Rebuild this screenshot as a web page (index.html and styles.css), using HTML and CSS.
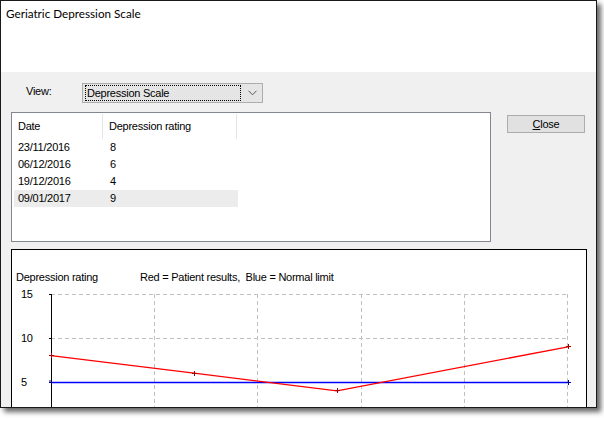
FILE: index.html
```html
<!DOCTYPE html>
<html>
<head>
<meta charset="utf-8">
<link rel="stylesheet" href="styles.css">
</head>
<body>
<div class="window">
  <div class="titlebar">Geriatric Depression Scale</div>
  <div class="content">
    <div class="view-row">
      <span class="view-label">View:</span>
      <div class="combo">
        <div class="combo-text">Depression Scale</div>
        <svg class="chevron" width="9" height="6" viewBox="0 0 9 6"><path d="M0.5 0.8 L4.5 4.8 L8.5 0.8" fill="none" stroke="#555" stroke-width="1"/></svg>
      </div>
    </div>
    <div class="list-row">
      <div class="listview">
        <div class="lv-header">
          <div class="lv-col c1">Date</div>
          <div class="lv-col c2">Depression rating</div>
        </div>
        <div class="lv-row"><div class="lv-cell c1">23/11/2016</div><div class="lv-cell c2">8</div></div>
        <div class="lv-row"><div class="lv-cell c1">06/12/2016</div><div class="lv-cell c2">6</div></div>
        <div class="lv-row"><div class="lv-cell c1">19/12/2016</div><div class="lv-cell c2">4</div></div>
        <div class="lv-row selected"><div class="lv-cell c1">09/01/2017</div><div class="lv-cell c2">9</div></div>
      </div>
      <button class="btn"><span class="u">C</span>lose</button>
    </div>
    <div class="chart">
      <svg width="574" height="180" viewBox="0 0 574 180">
        <g class="chart-text">
          <text x="4" y="31">Depression rating</text>
          <text x="128" y="31">Red = Patient results,&#160; Blue = Normal limit</text>
          <text x="9" y="48">15</text>
          <text x="9" y="92">10</text>
          <text x="9" y="136">5</text>
        </g>
        <g stroke="#c0c0c0" stroke-width="1" stroke-dasharray="4 3" fill="none">
          <path d="M39 44.5 H556"/>
          <path d="M39 88.5 H556"/>
          <path d="M142.5 44 V180"/>
          <path d="M245.5 44 V180"/>
          <path d="M349.5 44 V180"/>
          <path d="M452.5 44 V180"/>
          <path d="M555.5 44 V180"/>
        </g>
        <g stroke="#000" stroke-width="1" fill="none">
          <path d="M39.5 44 V180"/>
          <path d="M37 44.5 H39"/>
          <path d="M37 88.5 H39"/>
          <path d="M37 132.5 H39"/>
        </g>
        <path d="M39 132.5 H556" stroke="#0000ff" stroke-width="1.3" fill="none"/>
        <polyline points="39,105.6 182,123.2 325,140.8 556,96.8" stroke="#ff0000" stroke-width="1.3" fill="none"/>
        <g stroke="#a00000" stroke-width="1" fill="none">
          <path d="M37 105.5 H42 M39.5 103 V108"/>
          <path d="M180 123.5 H185 M182.5 121 V126"/>
          <path d="M323 140.5 H328 M325.5 138 V143"/>
          <path d="M554 96.5 H559 M556.5 94 V99"/>
        </g>
        <g stroke="#0000a0" stroke-width="1" fill="none">
          <path d="M554 132.5 H559 M556.5 130 V135"/>
          <path d="M38 130 V133"/>
        </g>
      </svg>
    </div>
  </div>
</div>
</body>
</html>
```
FILE: styles.css
```css
html, body {
  margin: 0;
  padding: 0;
  background: #ffffff;
}
body {
  width: 604px;
  height: 423px;
  overflow: hidden;
  font-family: "Liberation Sans", Arial, sans-serif;
  font-size: 11px;
  letter-spacing: -0.25px;
  color: #000;
}
.window {
  width: 595px;
  height: 406px;
  border: 1px solid #1a1a1a;
  background: #f0f0f0;
  box-shadow: 4px 4px 5px rgba(0, 0, 0, 0.6);
  overflow: hidden;
  display: flex;
  flex-direction: column;
}
.titlebar {
  height: 71px;
  flex: none;
  background: #ffffff;
  box-sizing: border-box;
  padding: 4px 0 0 5px;
  font-family: "Lato", "Open Sans", sans-serif;
  font-size: 11.7px;
  letter-spacing: 0;
  line-height: 16px;
  color: #000;
}
.content {
  flex: 1;
  padding: 11px 0 0 10px;
  display: flex;
  flex-direction: column;
}
.view-row {
  display: flex;
  align-items: center;
  height: 20px;
}
.view-label {
  width: 56px;
  padding-left: 15px;
  margin-top: -4px;
}
.combo {
  width: 177px;
  height: 18px;
  border: 1px solid #adadad;
  background: #e5e5e5;
  display: flex;
  align-items: center;
  padding-left: 2px;
}
.combo-text {
  width: 156px;
  height: 16px;
  box-sizing: border-box;
  border: 1px dotted #000;
  padding-left: 1px;
  line-height: 14px;
}
.chevron {
  margin-left: 7px;
}
.list-row {
  display: flex;
  align-items: flex-start;
  margin-top: 9px;
}
.listview {
  width: 478px;
  height: 128px;
  border: 1px solid #828790;
  background: #ffffff;
}
.lv-header {
  display: flex;
  height: 25px;
  margin-top: 1px;
}
.lv-col {
  box-sizing: border-box;
  border-right: 1px solid #e5e5e5;
  padding-left: 6px;
  line-height: 25px;
}
.c1 { width: 91px; }
.c2 { width: 134px; }
.lv-row {
  display: flex;
  height: 17px;
  line-height: 17px;
  margin-left: 2px;
  width: 224px;
}
.lv-row .c1 { width: 89px; padding-left: 4px; box-sizing: border-box; }
.lv-row .c2 { width: 135px; padding-left: 7px; box-sizing: border-box; }
.lv-row.selected {
  background: #ececec;
}
.btn {
  margin-left: 16px;
  margin-top: 3px;
  width: 78px;
  height: 18px;
  border: 1px solid #adadad;
  background: #e1e1e1;
  font-family: "Liberation Sans", Arial, sans-serif;
  font-size: 11px;
  letter-spacing: -0.25px;
  line-height: 14px;
  padding: 0;
  color: #000;
}
.u {
  text-decoration: underline;
}
.chart {
  margin-top: 7px;
  width: 574px;
  height: 200px;
  border: 1px solid #000;
  background: #ffffff;
  flex: none;
}
.chart svg {
  display: block;
}
.chart-text text {
  font-family: "Liberation Sans", Arial, sans-serif;
  font-size: 11px;
  letter-spacing: -0.25px;
  fill: #000;
}
```
